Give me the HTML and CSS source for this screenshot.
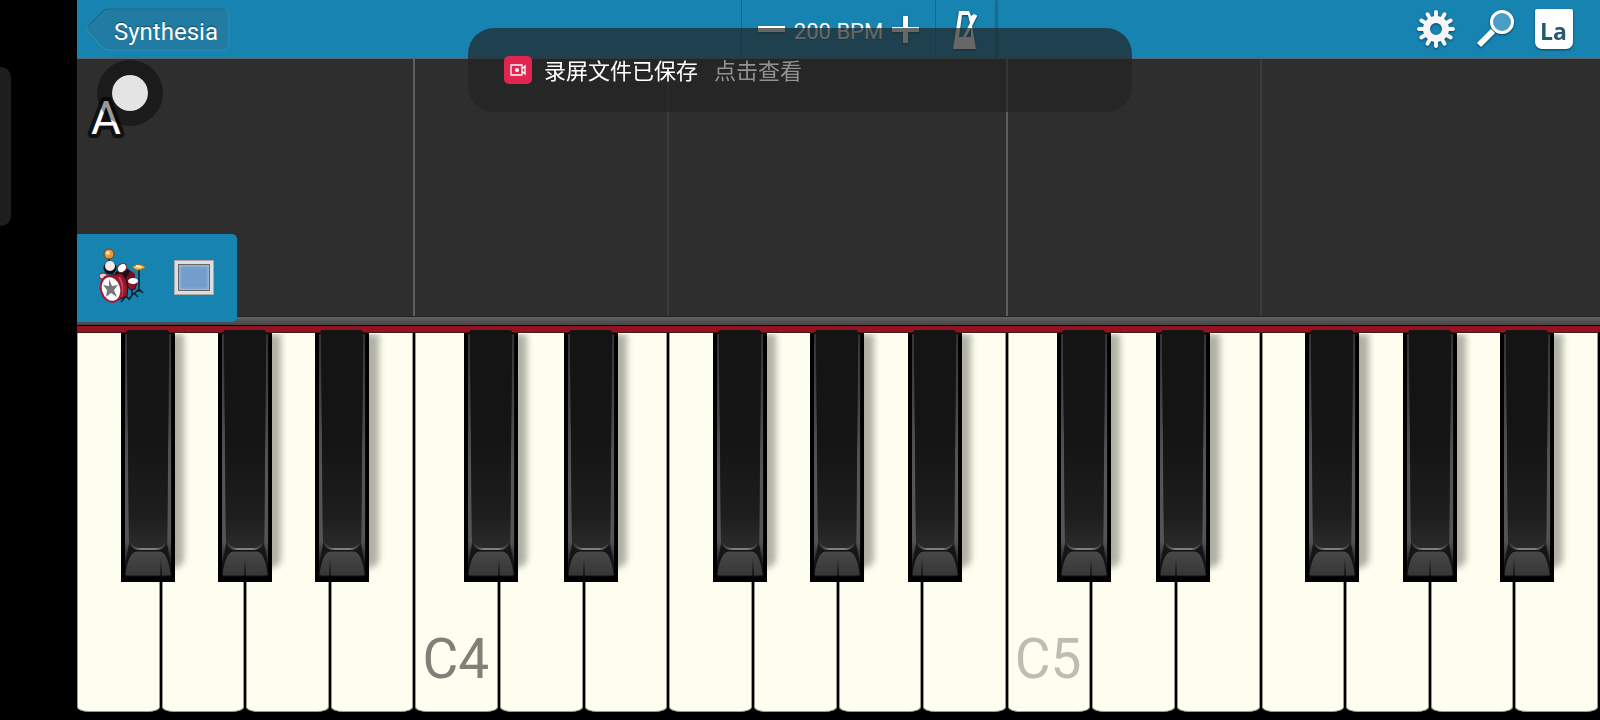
FILE: index.html
```html
<!DOCTYPE html>
<html lang="zh-CN">
<head>
<meta charset="utf-8">
<meta name="viewport" content="width=device-width, initial-scale=1">
<title>Synthesia</title>
<link rel="stylesheet" href="styles.css">
</head>
<body>
<svg class="defs" aria-hidden="true">
  <defs>
    <linearGradient id="body" x1="0" y1="0" x2="0" y2="1">
      <stop offset="0.5" stop-color="#141414"/><stop offset="0.85" stop-color="#1e1e1e"/><stop offset="1" stop-color="#2c2c2c"/>
    </linearGradient>
    <linearGradient id="edge" x1="0" y1="0" x2="0" y2="1">
      <stop offset="0" stop-color="#343434"/><stop offset="0.6" stop-color="#555"/><stop offset="0.9" stop-color="#545454"/><stop offset="1" stop-color="#222"/>
    </linearGradient>
    <linearGradient id="cap" x1="0" y1="0" x2="0" y2="1">
      <stop offset="0" stop-color="#484848"/><stop offset="1" stop-color="#363636"/>
    </linearGradient>
    <linearGradient id="lip" x1="0" y1="0" x2="1" y2="0">
      <stop offset="0" stop-color="#2a2a2a"/><stop offset="0.3" stop-color="#808080"/><stop offset="0.7" stop-color="#808080"/><stop offset="1" stop-color="#2a2a2a"/>
    </linearGradient>
    <symbol id="black" viewBox="0 0 54 252" preserveAspectRatio="none">
      <path d="M0 3H54V252H0Z" fill="#000"/>
      <path d="M5 3Q5 0 8 0H45Q48 0 48 3L50 246H4Z" fill="#161616"/>
      <path d="M4 4H6L8 214 4 234Z" fill="url(#edge)"/>
      <path d="M50 4H48L46 214 50 234Z" fill="url(#edge)"/>
      <path d="M6 3Q6 1 8 1H46Q48 1 48 3L46 213Q42 220 38 220H16Q12 220 8 213Z" fill="url(#body)"/>
      <path d="M9 213Q13 219 18 219H36Q41 219 45 213" fill="none" stroke="url(#lip)" stroke-width="2"/>
      <path d="M4 244Q7 222 15 221H39Q47 222 50 244Q50 246 48 246H6Q4 246 4 244Z" fill="url(#cap)" stroke="#111" stroke-width="1"/>
    </symbol>
  </defs>
</svg>

<aside class="rail"><div class="rail-handle"></div></aside>

<main class="app">
  <header class="toolbar">
    <div class="toolbar-start">
      <button class="back" type="button">
        <svg class="back-shape" viewBox="0 0 146 42" preserveAspectRatio="none" aria-hidden="true">
          <path d="M1 21Q1 20 3 18L17 4Q20 1 24 1H140Q145 1 145 5V36Q145 41 140 41H24Q20 41 17 38L3 23Q1 21 1 21Z" fill="#217ba2" stroke="#2f8fb8"/>
          <path d="M3 18L17 4Q20 1 24 1H141" fill="none" stroke="#166488"/>
        </svg>
        <span>Synthesia</span>
      </button>
    </div>
    <div class="tempo">
      <button class="step" type="button" aria-label="Slower"><svg width="27" height="27"><path d="M0 10H27V16H0Z" fill="#fff"/></svg></button>
      <span class="bpm">200 BPM</span>
      <button class="step" type="button" aria-label="Faster"><svg width="27" height="27"><path d="M11 0H16V11H27V16H16V27H11V16H0V11H11Z" fill="#fff"/></svg></button>
    </div>
    <div class="toolbar-end">
      <button class="metronome" type="button" aria-label="Metronome">
        <svg width="26" height="38" viewBox="0 0 26 38"><path fill="#fff" fill-rule="evenodd" d="M6 0H16L18 5L21 3L24 5L19 15L23 38H0ZM9 4L6 26H10L17 12L15 4ZM18 17L13 26H18Z"/><path d="M11 27L23 4" stroke="#fff" stroke-width="2"/></svg>
      </button>
      <nav class="tools">
        <button class="tool" type="button" aria-label="Settings">
          <svg width="40" height="40" viewBox="-20 -20 40 40">
            <g fill="none" stroke="#f6f6f6">
              <circle r="9.500" stroke-width="7"/>
              <g stroke-width="4" stroke-linecap="round">
                <path d="M0-11V-17M0 11V17M-11 0H-17M11 0H17"/>
                <path d="M0-11V-17M0 11V17M-11 0H-17M11 0H17" transform="rotate(30)"/>
                <path d="M0-11V-17M0 11V17M-11 0H-17M11 0H17" transform="rotate(60)"/>
              </g>
            </g>
          </svg>
        </button>
        <button class="tool" type="button" aria-label="Zoom">
          <svg width="40" height="40" viewBox="0 0 40 40"><path d="M4 36L18 22" stroke="#fff" stroke-width="6"/><circle cx="27" cy="13" r="10.500" fill="#4a9ec5" stroke="#fff" stroke-width="3"/></svg>
        </button>
        <button class="tool" type="button" aria-label="Note labels"><span class="label-tile">La</span></button>
      </nav>
    </div>
  </header>

  <section class="stage">
    <div class="lanes"><i class="bar"></i><i></i><i class="bar"></i><i></i><i></i></div>
    <svg class="letter" width="44" height="56"><text x="7" y="44">A</text></svg>
    <div class="tracks">
      <button class="track" type="button" aria-label="Drums">
        <svg width="50" height="58" viewBox="0 0 50 58">
          <g fill="none" stroke="#111c28" stroke-width="1.500"><path d="M10 9V17M40 21V44M33 37V48M35 45L30 51M35 45L39 49M40 41L36 45M40 41L44 45M27 48L22 54M27 48L31 52"/></g>
          <circle cx="10" cy="6" r="5" fill="#e99a35" stroke="#704018"/><circle cx="9" cy="5" r="2" fill="#ffe0a0"/>
          <circle cx="11" cy="20" r="6.500" fill="#111"/><circle cx="11" cy="18" r="5" fill="#f4e8ea"/>
          <path d="M18 25L21 17L28 20L36 26V36L26 33Z" fill="#6f1020"/>
          <path d="M15 27L21 18L31 23L26 32Z" fill="#171117"/>
          <ellipse cx="23" cy="20" rx="5" ry="4" fill="#fff" stroke="#7c1525" transform="rotate(-40 23 20)"/>
          <ellipse cx="4" cy="28" rx="4" ry="3" fill="#f3c9ce" stroke="#8d1b2d"/>
          <path d="M5 29L22 25Q31 33 28 48L14 54Z" fill="#94162b" stroke="#300811"/>
          <path d="M20 29Q26 38 22 49" fill="none" stroke="#c04c5e" stroke-width="2"/>
          <ellipse cx="12" cy="41" rx="10" ry="13" fill="#fff" stroke="#a31a31" stroke-width="2" transform="rotate(-16 12 41)"/>
          <path d="M10 31L13 38L19 37L15 42L18 49L12 45L7 49L8 42L4 37L10 38Z" fill="#777"/>
          <path d="M28 34Q34 31 38 34L36 41Q31 43 29 39Z" fill="#8c172a" stroke="#1a1118"/>
          <ellipse cx="34" cy="33" rx="5" ry="3" fill="#fff"/>
          <path d="M33 19Q39 14 47 19Q42 23 37 22Z" fill="#edb94f" stroke="#8d682d" stroke-width="1"/><path d="M37 18L42 19" stroke="#fff2bc" stroke-width="2"/>
        </svg>
      </button>
      <button class="track" type="button" aria-label="Display"><span class="screen"></span></button>
    </div>
  </section>

  <div class="rim"></div>
  <div class="felt"></div>
  <section class="keyboard">
    <div class="slot"><button class="white" aria-label="F3"></button><button class="black fs" aria-label="F♯3"><svg><use href="#black"/></svg></button></div>
    <div class="slot"><button class="white" aria-label="G3"></button><button class="black gs" aria-label="G♯3"><svg><use href="#black"/></svg></button></div>
    <div class="slot"><button class="white" aria-label="A3"></button><button class="black as" aria-label="A♯3"><svg><use href="#black"/></svg></button></div>
    <div class="slot"><button class="white" aria-label="B3"></button></div>
    <div class="slot"><button class="white">C4</button><button class="black cs" aria-label="C♯4"><svg><use href="#black"/></svg></button></div>
    <div class="slot"><button class="white" aria-label="D4"></button><button class="black ds" aria-label="D♯4"><svg><use href="#black"/></svg></button></div>
    <div class="slot"><button class="white" aria-label="E4"></button></div>
    <div class="slot"><button class="white" aria-label="F4"></button><button class="black fs" aria-label="F♯4"><svg><use href="#black"/></svg></button></div>
    <div class="slot"><button class="white" aria-label="G4"></button><button class="black gs" aria-label="G♯4"><svg><use href="#black"/></svg></button></div>
    <div class="slot"><button class="white" aria-label="A4"></button><button class="black as" aria-label="A♯4"><svg><use href="#black"/></svg></button></div>
    <div class="slot"><button class="white" aria-label="B4"></button></div>
    <div class="slot"><button class="white faint">C5</button><button class="black cs" aria-label="C♯5"><svg><use href="#black"/></svg></button></div>
    <div class="slot"><button class="white" aria-label="D5"></button><button class="black ds" aria-label="D♯5"><svg><use href="#black"/></svg></button></div>
    <div class="slot"><button class="white" aria-label="E5"></button></div>
    <div class="slot"><button class="white" aria-label="F5"></button><button class="black fs" aria-label="F♯5"><svg><use href="#black"/></svg></button></div>
    <div class="slot"><button class="white" aria-label="G5"></button><button class="black gs" aria-label="G♯5"><svg><use href="#black"/></svg></button></div>
    <div class="slot"><button class="white" aria-label="A5"></button><button class="black as" aria-label="A♯5"><svg><use href="#black"/></svg></button></div>
    <div class="slot"><button class="white" aria-label="B5"></button></div>
  </section>
</main>

<div class="touch"></div>

<div class="toast" role="status">
  <span class="toast-icon">
    <svg width="28" height="28" viewBox="0 0 28 28" aria-hidden="true"><path d="M7 9H18V19H7ZM18 13L21 10V18L18 15" fill="none" stroke="#fff" stroke-width="1.300"/><circle cx="13" cy="14" r="2" fill="#fff"/></svg>
  </span>
  <span class="toast-title">录屏文件已保存</span>
  <a class="toast-link" href="#">点击查看</a>
</div>
</body>
</html>
```
FILE: styles.css
```css
* { box-sizing: border-box; }

body {
  margin: 0;
  display: flex;
  height: 100vh;
  overflow: hidden;
  background: #000;
  font-family: Roboto, "Noto Sans CJK SC", sans-serif;
}

button {
  margin: 0;
  padding: 0;
  border: 0;
  background: none;
  font: inherit;
  color: inherit;
  cursor: pointer;
}

svg { display: block; }

.defs { position: absolute; width: 0; height: 0; }

.rail { flex: 0 0 77px; padding-top: 67px; }

.rail-handle {
  width: 11px;
  height: 159px;
  border-radius: 0 10px 10px 0;
  background: #1e1e1e;
}

.app {
  flex: 1;
  min-width: 0;
  display: flex;
  flex-direction: column;
  overflow: hidden;
  padding-bottom: 8px;
}

/* Toolbar */
.toolbar {
  display: grid;
  grid-template-columns: 1fr auto 1fr;
  height: 59px;
  background: #1783b0;
  border-bottom: 1px solid #56666c;
  color: #fff;
}

.toolbar-start { padding: 8px; }

.back {
  position: relative;
  height: 43px;
  padding: 4px 12px 0 29px;
  font-size: 24px;
  text-shadow: 0 -1px 1px rgba(0, 0, 0, 0.4);
}

.back-shape { position: absolute; inset: 0; width: 100%; height: 100%; }

.back span { position: relative; }

.tempo {
  display: flex;
  align-items: center;
  gap: 9px;
  padding: 0 16px;
  border: solid #11698f;
  border-width: 0 1px;
}

.bpm { font-size: 22px; padding-top: 4px; text-shadow: 0 1px 1px rgba(0, 0, 0, 0.3); }

.step, .metronome, .tool { filter: drop-shadow(0 1px 1px rgba(0, 0, 0, 0.5)); }

.toolbar-end { display: flex; justify-content: space-between; }

.metronome {
  width: 61px;
  border-right: 1px solid #11698f;
  display: grid;
  place-items: center;
}

.tools { display: flex; padding: 0 17px 2px 0; }

.tool { width: 59px; display: grid; place-items: center; }

.label-tile {
  width: 38px;
  height: 40px;
  border-radius: 2px 2px 7px 7px;
  background: #fff;
  color: #245a70;
  font: 700 23px/44px "Open Sans", sans-serif;
}

/* Note area */
.stage {
  position: relative;
  flex: 1;
  min-height: 0;
  background: #2e2e2e;
}

.lanes {
  display: grid;
  grid-template-columns: 4fr 3fr 4fr 3fr 4fr;
  height: 100%;
}

.lanes i { border-right: 2px solid #3b3b3b; }
.lanes .bar { border-color: #5e5e5e; }
.lanes i:last-child { border: 0; }

.letter {
  position: absolute;
  left: 7px;
  top: 31px;
  font-size: 46px;
  fill: #fff;
  stroke: #111;
  stroke-width: 8px;
  stroke-linejoin: round;
  paint-order: stroke fill;
}

.tracks {
  position: absolute;
  left: 0;
  bottom: -6px;
  z-index: 1;
  display: flex;
  align-items: center;
  gap: 25px;
  height: 88px;
  padding: 0 23px 2px 22px;
  border-radius: 0 5px 5px 0;
  background: #1783b0;
}

.screen {
  display: block;
  width: 40px;
  height: 35px;
  border: 4px solid #dedede;
  outline: 1px solid #aaa;
  outline-offset: -1px;
  background: #749dcc;
  box-shadow: inset 0 0 0 1px #666, inset 0 0 3px 2px #a5c0e0;
}

.rim {
  height: 10px;
  border-top: 1px solid #202020;
  border-bottom: 1px solid #000;
  background: linear-gradient(#626262, #464646);
}

.felt { height: 6px; background: #941320; }

/* Keyboard */
.keyboard {
  display: grid;
  grid-template-columns: repeat(18, 1fr);
  height: 380px;
  margin: 0 1px 0 -1px;
  border-top: 1px solid #4a1515;
}

.slot { position: relative; padding: 0 1px; background: #000; }

.slot::after {
  content: "";
  position: absolute;
  right: -1px;
  top: 225px;
  z-index: 2;
  width: 2px;
  height: 30px;
  background: linear-gradient(transparent, #000);
}

.white {
  display: flex;
  align-items: flex-end;
  width: 100%;
  height: 100%;
  padding: 0 0 20px 6px;
  border: solid #9a9b90;
  border-width: 0 1px 1px;
  border-radius: 0 0 12px 12px / 0 0 5px 5px;
  background: #fdfef0;
  color: #808078;
  font-size: 55px;
  line-height: 64px;
}

.faint { color: #bdbeb1; }

.black {
  position: absolute;
  top: -3px;
  z-index: 1;
  width: 64%;
  height: 252px;
}

.black::before {
  content: "";
  position: absolute;
  inset: 4px -9px 14px 20px;
  border-radius: 0 0 10px 0;
  background: #b0b0a5;
  filter: blur(3px);
  clip-path: inset(0 -12px -12px 0);
}

.black svg { position: relative; width: 100%; height: 100%; }

.fs { left: 53%; }
.gs { left: 68%; }
.as { left: 83%; }
.cs { left: 59%; }
.ds { left: 77%; }

/* Overlays */
.touch {
  position: fixed;
  left: 97px;
  top: 60px;
  width: 66px;
  height: 66px;
  border: 15px solid rgba(0, 0, 0, 0.4);
  border-radius: 50%;
  background: #e4e4e4 padding-box;
}

.toast {
  position: fixed;
  left: 50%;
  top: 28px;
  z-index: 3;
  transform: translateX(-50%);
  display: flex;
  align-items: center;
  width: 664px;
  height: 84px;
  padding: 0 36px;
  border-radius: 26px;
  background: rgba(35, 35, 35, 0.69);
  font: 22px/32px "Noto Sans CJK SC", sans-serif;
  color: #fff;
}

.toast-icon { border-radius: 5px; background: #e0264f; }

.toast-title { margin: 0 16px 0 12px; }

.toast-title, .toast-link { padding-bottom: 2px; }

.toast-link { color: #929292; text-decoration: none; }
```
